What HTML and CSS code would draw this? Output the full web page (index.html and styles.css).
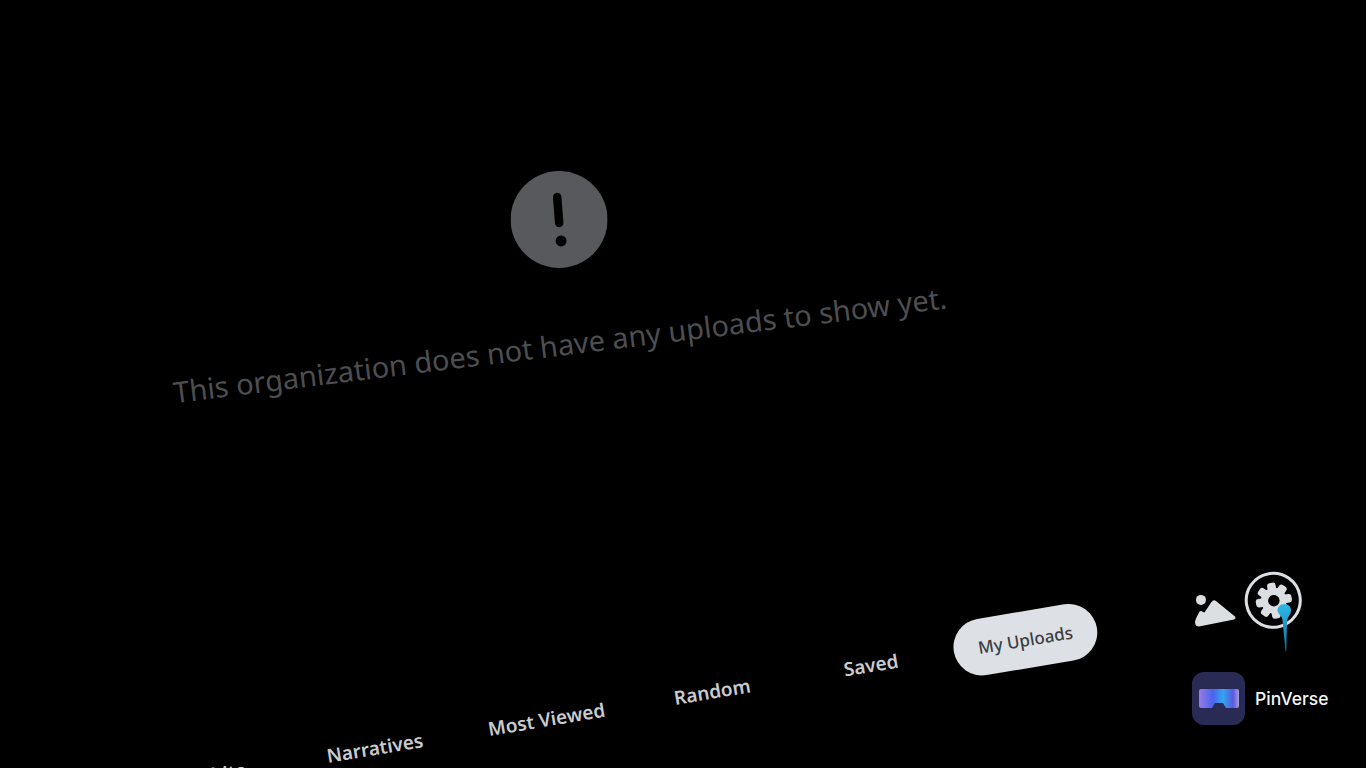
FILE: index.html
```html
<!DOCTYPE html>
<html lang="en">
<head>
    <meta charset="UTF-8">
    <meta name="viewport" content="width=device-width, initial-scale=1.0">
    <title>PinVerse</title>
    <link rel="stylesheet" href="styles.css">
</head>
<body>
    <main class="scene">
        <section class="notice">
            <div class="notice-icon">
                <svg width="97" height="97" viewBox="0 0 97 97">
                    <circle cx="48.5" cy="48.5" r="48.5" fill="#58595c"/>
                    <path d="M46.6 26 L48.6 52" stroke="#000" stroke-width="8.5" stroke-linecap="round" fill="none"/>
                    <circle cx="50.5" cy="70" r="5.5" fill="#000"/>
                </svg>
            </div>
            <p class="notice-text">This organization does not have any uploads to show yet.</p>
        </section>

        <nav class="tabs">
            <span class="tab tab-cut">Exhibits</span>
            <span class="tab tab-narratives">Narratives</span>
            <span class="tab tab-viewed">Most Viewed</span>
            <span class="tab tab-random">Random</span>
            <span class="tab tab-saved">Saved</span>
            <span class="tab tab-active">My Uploads</span>
            <svg class="tool-image" width="44" height="36" viewBox="0 0 44 36">
                <circle cx="7" cy="5.5" r="5" fill="#dcdfe2"/>
                <path d="M1.500 30 Q0.500 27 2 24 L5 18 Q6.500 15.500 9 17.500 L10.500 18 L17.500 7.500 Q19.500 5 22 6.500 L41 22 Q42.500 24 40 25 L5 32 Q2 32 1.500 30 Z" fill="#dcdfe2"/>
            </svg>
            <span class="tool-gear">
                <svg width="38" height="38" viewBox="-20 -20 40 40">
                    <g fill="#dcdfe2">
                        <rect x="-4.500" y="-19" width="9" height="38" rx="3"/>
                        <rect x="-4.500" y="-19" width="9" height="38" rx="3" transform="rotate(45)"/>
                        <rect x="-4.500" y="-19" width="9" height="38" rx="3" transform="rotate(90)"/>
                        <rect x="-4.500" y="-19" width="9" height="38" rx="3" transform="rotate(135)"/>
                        <circle r="13.500"/>
                    </g>
                    <circle r="6" fill="#000"/>
                </svg>
            </span>
        </nav>

        <!-- controller pointer over the gear -->
        <svg class="pointer" width="20" height="50" viewBox="0 0 20 50">
            <defs>
                <linearGradient id="beam" x1="0" y1="0" x2="0" y2="1">
                    <stop offset="0" stop-color="#2fb9e8"/>
                    <stop offset="1" stop-color="#0b6f9c"/>
                </linearGradient>
            </defs>
            <path d="M9 1 C13 1 16.500 4 16 8 C15.500 12 12.500 14 12 18 L11.300 48 L10.500 48 L7.500 17 C7 13 3 11 2.500 7.500 C2.500 4 5 1 9 1 Z" fill="url(#beam)"/>
        </svg>

        <div class="brand">
            <span class="brand-logo">
                <svg width="44" height="26" viewBox="0 0 44 26">
                    <defs>
                        <linearGradient id="lens" x1="0" y1="0" x2="1" y2="0">
                            <stop offset="0" stop-color="#9a7be8"/>
                            <stop offset="0.35" stop-color="#4a63ee"/>
                            <stop offset="0.6" stop-color="#33a6ee"/>
                            <stop offset="0.85" stop-color="#5a58e0"/>
                            <stop offset="1" stop-color="#a79ad8"/>
                        </linearGradient>
                    </defs>
                    <path d="M4 3 H40 Q42 3 42 5 V20 Q42 22 40 22 H29 L26 17 H18 L15 22 H4 Q2 22 2 20 V5 Q2 3 4 3 Z" fill="url(#lens)"/>
                </svg>
            </span>
            <span class="brand-name">PinVerse</span>
        </div>
    </main>
</body>
</html>
```

FILE: styles.css
```css
html, body {
    margin: 0;
    padding: 0;
    background: #000;
}
.scene {
    position: relative;
    width: 1366px;
    height: 768px;
    overflow: hidden;
    background: #000;
    font-family: "Noto Sans", "Open Sans", sans-serif;
}
.notice {
    width: 800px;
    margin-left: 140px;
    padding-top: 173px;
    display: flex;
    flex-direction: column;
    align-items: center;
    transform: rotate(-7deg);
}
.notice-icon {
    height: 97px;
    margin-left: 28px;
    transform: rotate(7deg);
}
.notice-text {
    margin: 56px 0 0;
    font-size: 29px;
    line-height: 40px;
    color: #4d4e50;
    white-space: nowrap;
}
.tabs {
    width: 1200px;
    margin: 293px 0 0 122px;
    display: flex;
    align-items: center;
    transform: rotate(-9.5deg);
}
.tab {
    flex: none;
    text-align: center;
    font-size: 19px;
    font-weight: 600;
    color: #c9cbce;
    white-space: nowrap;
}
/* tabs get narrower to the right, the panel recedes */
.tab-cut { width: 160px; }
.tab-narratives { width: 176px; }
.tab-viewed { width: 172px; }
.tab-random { width: 164px; }
.tab-saved { width: 158px; }
.tab-active {
    width: 145px;
    height: 57px;
    line-height: 57px;
    margin: 1px 0 0 5px;
    border-radius: 29px;
    background: #dde0e4;
    color: #3a3d42;
    font-size: 17px;
    font-weight: 500;
}
.tool-image {
    flex: none;
    margin: 10px 0 0 98px;
    transform: rotate(9.5deg);
}
.tool-gear {
    flex: none;
    box-sizing: border-box;
    width: 57px;
    height: 57px;
    margin: 5px 0 0 8px;
    border: 3px solid #dcdfe2;
    border-radius: 50%;
    display: flex;
    align-items: center;
    justify-content: center;
}
.pointer {
    position: absolute;
    left: 1275px;
    top: 603px;
}
.brand {
    position: absolute;
    left: 1192px;
    top: 672px;
    display: flex;
    align-items: center;
    gap: 10px;
}
.brand-logo {
    width: 53px;
    height: 53px;
    border-radius: 12px;
    background: #2a2b55;
    display: flex;
    align-items: center;
    justify-content: center;
}
.brand-name {
    font-family: Inter, "Noto Sans", sans-serif;
    font-size: 17.5px;
    font-weight: 500;
    color: #f4f4f6;
}
```
